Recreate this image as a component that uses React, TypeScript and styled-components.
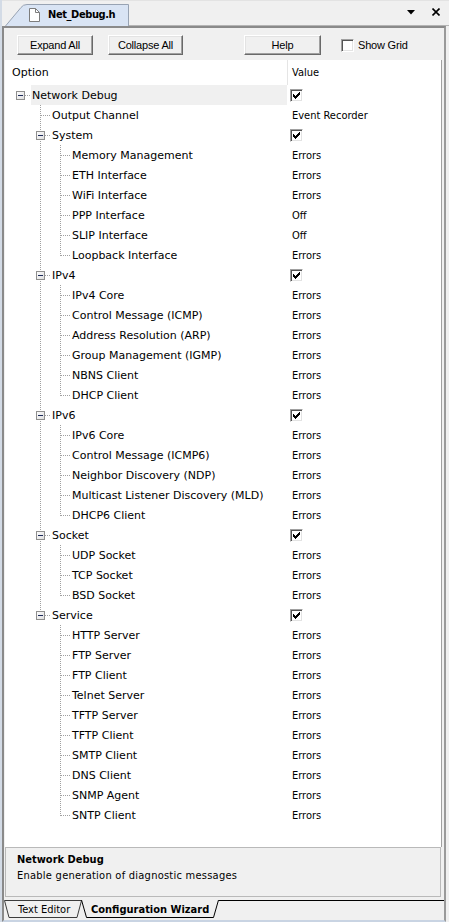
import React from 'react';
import styled, { createGlobalStyle, css } from 'styled-components';

const UI = '"DejaVu Sans Condensed", "DejaVu Sans", sans-serif';
const UIW = '"DejaVu Sans", sans-serif';
const BTN = '"Liberation Sans", Arial, sans-serif';

const Global = createGlobalStyle`
  html, body { margin: 0; padding: 0; background: #f0f0f0; }
  #root { width: 449px; height: 922px; }
  * { box-sizing: border-box; }
`;

type Node = { label: string; value?: string; check?: boolean; selected?: boolean; children?: Node[] };

const E = (label: string, value = 'Errors'): Node => ({ label, value });

const tree: Node[] = [
  {
    label: 'Network Debug',
    check: true,
    selected: true,
    children: [
      { label: 'Output Channel', value: 'Event Recorder' },
      {
        label: 'System',
        check: true,
        children: [
          E('Memory Management'),
          E('ETH Interface'),
          E('WiFi Interface'),
          E('PPP Interface', 'Off'),
          E('SLIP Interface', 'Off'),
          E('Loopback Interface'),
        ],
      },
      {
        label: 'IPv4',
        check: true,
        children: [
          E('IPv4 Core'),
          E('Control Message (ICMP)'),
          E('Address Resolution (ARP)'),
          E('Group Management (IGMP)'),
          E('NBNS Client'),
          E('DHCP Client'),
        ],
      },
      {
        label: 'IPv6',
        check: true,
        children: [
          E('IPv6 Core'),
          E('Control Message (ICMP6)'),
          E('Neighbor Discovery (NDP)'),
          E('Multicast Listener Discovery (MLD)'),
          E('DHCP6 Client'),
        ],
      },
      {
        label: 'Socket',
        check: true,
        children: [E('UDP Socket'), E('TCP Socket'), E('BSD Socket')],
      },
      {
        label: 'Service',
        check: true,
        children: [
          E('HTTP Server'),
          E('FTP Server'),
          E('FTP Client'),
          E('Telnet Server'),
          E('TFTP Server'),
          E('TFTP Client'),
          E('SMTP Client'),
          E('DNS Client'),
          E('SNMP Agent'),
          E('SNTP Client'),
        ],
      },
    ],
  },
];

type Flat = { node: Node; level: number; last: boolean; ancestorsLast: boolean[] };

function flatten(nodes: Node[], level = 0, ancestorsLast: boolean[] = []): Flat[] {
  const out: Flat[] = [];
  nodes.forEach((n, i) => {
    const last = i === nodes.length - 1;
    out.push({ node: n, level, last, ancestorsLast });
    if (n.children) out.push(...flatten(n.children, level + 1, [...ancestorsLast, last]));
  });
  return out;
}

const rows = flatten(tree);

/* ---------- layout ---------- */

const Window = styled.div`
  width: 449px;
  height: 922px;
  display: flex;
  flex-direction: column;
  background: #f0f0f0;
  border-left: 2px solid #d3dbe6;
  overflow: hidden;
`;

const TitleStrip = styled.div`
  height: 26px;
  display: flex;
  align-items: flex-end;
  padding-left: 3px;
  border-top: 1px solid #e3e3e3;
  flex-shrink: 0;
`;

const TitleFill = styled.div`
  flex: 1;
  height: 100%;
  display: flex;
  align-items: center;
  justify-content: flex-end;
  gap: 17px;
  padding-right: 9px;
  padding-bottom: 2px;
  border-bottom: 1px solid #b4b4b4;
`;

const DocTab = styled.div`
  position: relative;
  width: 124px;
  height: 23px;
  display: flex;
  align-items: center;
  padding-left: 24px;
  font-family: ${UI};
  font-size: 11px;
  font-weight: bold;
  letter-spacing: -0.4px;
  color: #000;
`;

const TabShape = styled.svg`
  position: absolute;
  left: 0;
  top: 0;
  z-index: 0;
`;

const TabContent = styled.span`
  position: relative;
  z-index: 1;
  display: flex;
  align-items: center;
  gap: 8px;
`;

const Frame = styled.div`
  flex: 1;
  display: flex;
  flex-direction: column;
  margin-right: 3px;
  border-style: solid;
  border-width: 2px;
  border-color: #8a8a8a #9a9a9a #c9d4e3 #8a8a8a;
  min-height: 0;
`;

const Toolbar = styled.div`
  height: 32px;
  display: flex;
  align-items: center;
  padding: 2px 0 0 13px;
  flex-shrink: 0;
`;

const Button = styled.button<{ $w: number; $gap?: number }>`
  width: ${(p) => p.$w}px;
  height: 20px;
  margin-left: ${(p) => p.$gap ?? 0}px;
  padding: 0;
  font-family: ${BTN};
  font-size: 11px;
  letter-spacing: -0.2px;
  color: #000;
  background: #f0f0f0;
  border: 1px solid;
  border-color: #ffffff #696969 #696969 #ffffff;
  box-shadow: inset -1px -1px 0 #a0a0a0, inset 1px 1px 0 #e3e3e3;
`;

const GridToggle = styled.label`
  display: flex;
  align-items: center;
  margin-left: 20px;
  gap: 4px;
  font-family: ${BTN};
  font-size: 11px;
  letter-spacing: -0.2px;
  color: #000;
`;

const CheckBox = styled.span<{ $shift?: number }>`
  width: 13px;
  height: 13px;
  display: inline-flex;
  align-items: center;
  justify-content: center;
  margin-left: ${(p) => p.$shift ?? 0}px;
  background: #fff;
  border: 1px solid;
  border-color: #a0a0a0 #ffffff #ffffff #a0a0a0;
  box-shadow: inset 1px 1px 0 #555, inset -1px -1px 0 #e3e3e3;
  flex-shrink: 0;
`;

const Tree = styled.div`
  height: 787px;
  margin: 0 2px 0 1px;
  background: #fff;
  border-right: 1px solid #a0a0a0;
  display: flex;
  flex-direction: column;
  flex-shrink: 0;
  font-family: ${UI};
  font-size: 11px;
  color: #000;
`;

const HeaderRow = styled.div`
  height: 25px;
  display: flex;
  flex-shrink: 0;
`;

const HeaderCell = styled.div<{ $value?: boolean }>`
  display: flex;
  align-items: center;
  ${(p) =>
    p.$value
      ? css`
          flex: 1;
          padding-left: 4px;
          border-left: 1px solid #e5e5e5;
        `
      : css`
          width: 282px;
          padding-left: 7px;
          font-family: ${UIW};
        `}
`;

const Row = styled.div`
  height: 20px;
  display: flex;
  flex-shrink: 0;
`;

const OptionCell = styled.div`
  width: 282px;
  display: flex;
  align-items: stretch;
`;

const Label = styled.div<{ $selected?: boolean }>`
  flex: 1;
  display: flex;
  align-items: center;
  padding-left: 1px;
  white-space: nowrap;
  font-family: ${UIW};
  background: ${(p) => (p.$selected ? '#f0f0f0' : 'transparent')};
`;

const ValueCell = styled.div`
  flex: 1;
  display: flex;
  align-items: center;
  padding-left: 5px;
  white-space: nowrap;
`;

const Description = styled.div`
  height: 50px;
  margin: 0 3px 0 1px;
  border: 1px solid #b9b9b9;
  padding: 4px 0 0 11px;
  font-family: ${UI};
  font-size: 11px;
  line-height: 16px;
  letter-spacing: 0.25px;
  color: #000;
  flex-shrink: 0;
`;

const DescTitle = styled.div`
  font-weight: bold;
  letter-spacing: 0;
`;

const TabStrip = styled.div`
  flex: 1;
  display: flex;
  align-items: flex-start;
  padding-top: 3px;
  font-family: ${UI};
  font-size: 11px;
  color: #000;
`;

const BottomTab = styled.div<{ $w: number; $active?: boolean; $pad: number }>`
  position: relative;
  width: ${(p) => p.$w}px;
  height: 18px;
  display: flex;
  align-items: center;
  padding-left: ${(p) => p.$pad}px;
  margin-left: ${(p) => (p.$active ? -5 : 0)}px;
  z-index: ${(p) => (p.$active ? 2 : 1)};
  font-weight: ${(p) => (p.$active ? 'bold' : 'normal')};
  flex-shrink: 0;
`;

const StripLine = styled.div`
  flex: 1;
  border-top: 1px solid #000;
`;

/* ---------- drawings ---------- */

const DocIcon = () => (
  <svg width="11" height="14" viewBox="0 0 11 14">
    <path d="M0.5 0.5 H6.5 L10.5 4.5 V13.5 H0.5 Z" fill="#fff" stroke="#7d7d7d" />
    <path d="M6.5 0.5 V4.5 H10.5" fill="none" stroke="#7d7d7d" />
  </svg>
);

const MenuArrow = () => (
  <svg width="8" height="5" viewBox="0 0 8 5">
    <path d="M0 0 H8 L4 4.5 Z" fill="#000" />
  </svg>
);

const CloseIcon = () => (
  <svg width="8" height="8" viewBox="0 0 8 8">
    <path d="M0.5 0.5 L7.5 7.5 M7.5 0.5 L0.5 7.5" stroke="#000" strokeWidth="1.6" />
  </svg>
);

const Tick = () => (
  <svg width="7" height="7" viewBox="0 0 7 7" shapeRendering="crispEdges">
    <path d="M0 2 H1 V3 H2 V4 H3 V3 H4 V2 H5 V1 H6 V0 H7 V3 H6 V4 H5 V5 H4 V6 H3 V7 H2 V6 H1 V5 H0 Z" fill="#000" />
  </svg>
);

const LINE = '#a0a0a0';

function Connector({ f }: { f: Flat }) {
  const { level, last, ancestorsLast, node } = f;
  const w = 26 + 20 * level;
  const cx = 20 + 20 * level;
  const textX = 31 + 20 * level;
  const parts: React.ReactNode[] = [];
  for (let k = 1; k < level; k++) {
    if (!ancestorsLast[k]) {
      const x = 20 + 20 * k + 0.5;
      parts.push(<line key={'a' + k} x1={x} y1={0} x2={x} y2={20} stroke={LINE} strokeDasharray="1 1" />);
    }
  }
  if (level >= 1) {
    const x = cx + 0.5;
    parts.push(
      <line key="own" x1={x} y1={0} x2={x} y2={last ? 11 : 20} stroke={LINE} strokeDasharray="1 1" />
    );
  }
  const hasBox = !!node.children;
  const hStart = hasBox ? cx + 5 : cx + 1;
  parts.push(<line key="h" x1={hStart} y1={10.5} x2={textX} y2={10.5} stroke={LINE} strokeDasharray="1 1" />);
  if (hasBox) {
    parts.push(
      <g key="box">
        <rect x={cx - 3.5} y={6.5} width={8} height={8} fill="url(#boxfill)" stroke="#8f8f8f" />
        <line x1={cx - 2} y1={10.5} x2={cx + 3} y2={10.5} stroke="#1c2a5a" />
      </g>
    );
  }
  return (
    <svg width={w} height={20} viewBox={`5 0 ${w} 20`} shapeRendering="crispEdges" style={{ flexShrink: 0 }}>
      <defs>
        <linearGradient id="boxfill" x1="0" y1="0" x2="1" y2="1">
          <stop offset="0" stopColor="#ffffff" />
          <stop offset="1" stopColor="#dcdcdc" />
        </linearGradient>
      </defs>
      {parts}
    </svg>
  );
}

function Value({ node }: { node: Node }) {
  if (node.check)
    return (
      <CheckBox $shift={-2}>
        <Tick />
      </CheckBox>
    );
  return <>{node.value}</>;
}

export default function App() {
  return (
    <>
      <Global />
      <Window>
        <TitleStrip>
          <DocTab>
            <TabShape width="126" height="23" viewBox="0 0 126 23">
              <path d="M0.5 23 L16 4.5 Q18 1.5 22 1.5 H123.5 V23" fill="#d9e4f4" stroke="#98a3b3" />
            </TabShape>
            <TabContent>
              <DocIcon />
              Net_Debug.h
            </TabContent>
          </DocTab>
          <TitleFill>
            <MenuArrow />
            <CloseIcon />
          </TitleFill>
        </TitleStrip>
        <Frame>
          <Toolbar>
            <Button $w={76}>Expand All</Button>
            <Button $w={75} $gap={15}>
              Collapse All
            </Button>
            <Button $w={77} $gap={61}>
              Help
            </Button>
            <GridToggle>
              <CheckBox />
              Show Grid
            </GridToggle>
          </Toolbar>
          <Tree>
            <HeaderRow>
              <HeaderCell>Option</HeaderCell>
              <HeaderCell $value>Value</HeaderCell>
            </HeaderRow>
            {rows.map((f, i) => (
              <Row key={i}>
                <OptionCell>
                  <Connector f={f} />
                  <Label $selected={f.node.selected}>{f.node.label}</Label>
                </OptionCell>
                <ValueCell>
                  <Value node={f.node} />
                </ValueCell>
              </Row>
            ))}
          </Tree>
          <Description>
            <DescTitle>Network Debug</DescTitle>
            <div>Enable generation of diagnostic messages</div>
          </Description>
          <TabStrip>
            <BottomTab $w={82} $pad={14}>
              <TabShape width="82" height="18" viewBox="0 0 82 18">
                <path d="M0.5 0.5 L5 17.5 H73 L77.5 0.5 Z" fill="#f0f0f0" stroke="#3c3c3c" />
              </TabShape>
              <TabContent>Text Editor</TabContent>
            </BottomTab>
            <BottomTab $w={138} $pad={10} $active>
              <TabShape width="138" height="18" viewBox="0 0 138 18">
                <path d="M0.5 0 L5.5 17.5 H132.5 L137.5 0" fill="#f0f0f0" stroke="#000" />
              </TabShape>
              <TabContent>Configuration Wizard</TabContent>
            </BottomTab>
            <StripLine />
          </TabStrip>
        </Frame>
      </Window>
    </>
  );
}
